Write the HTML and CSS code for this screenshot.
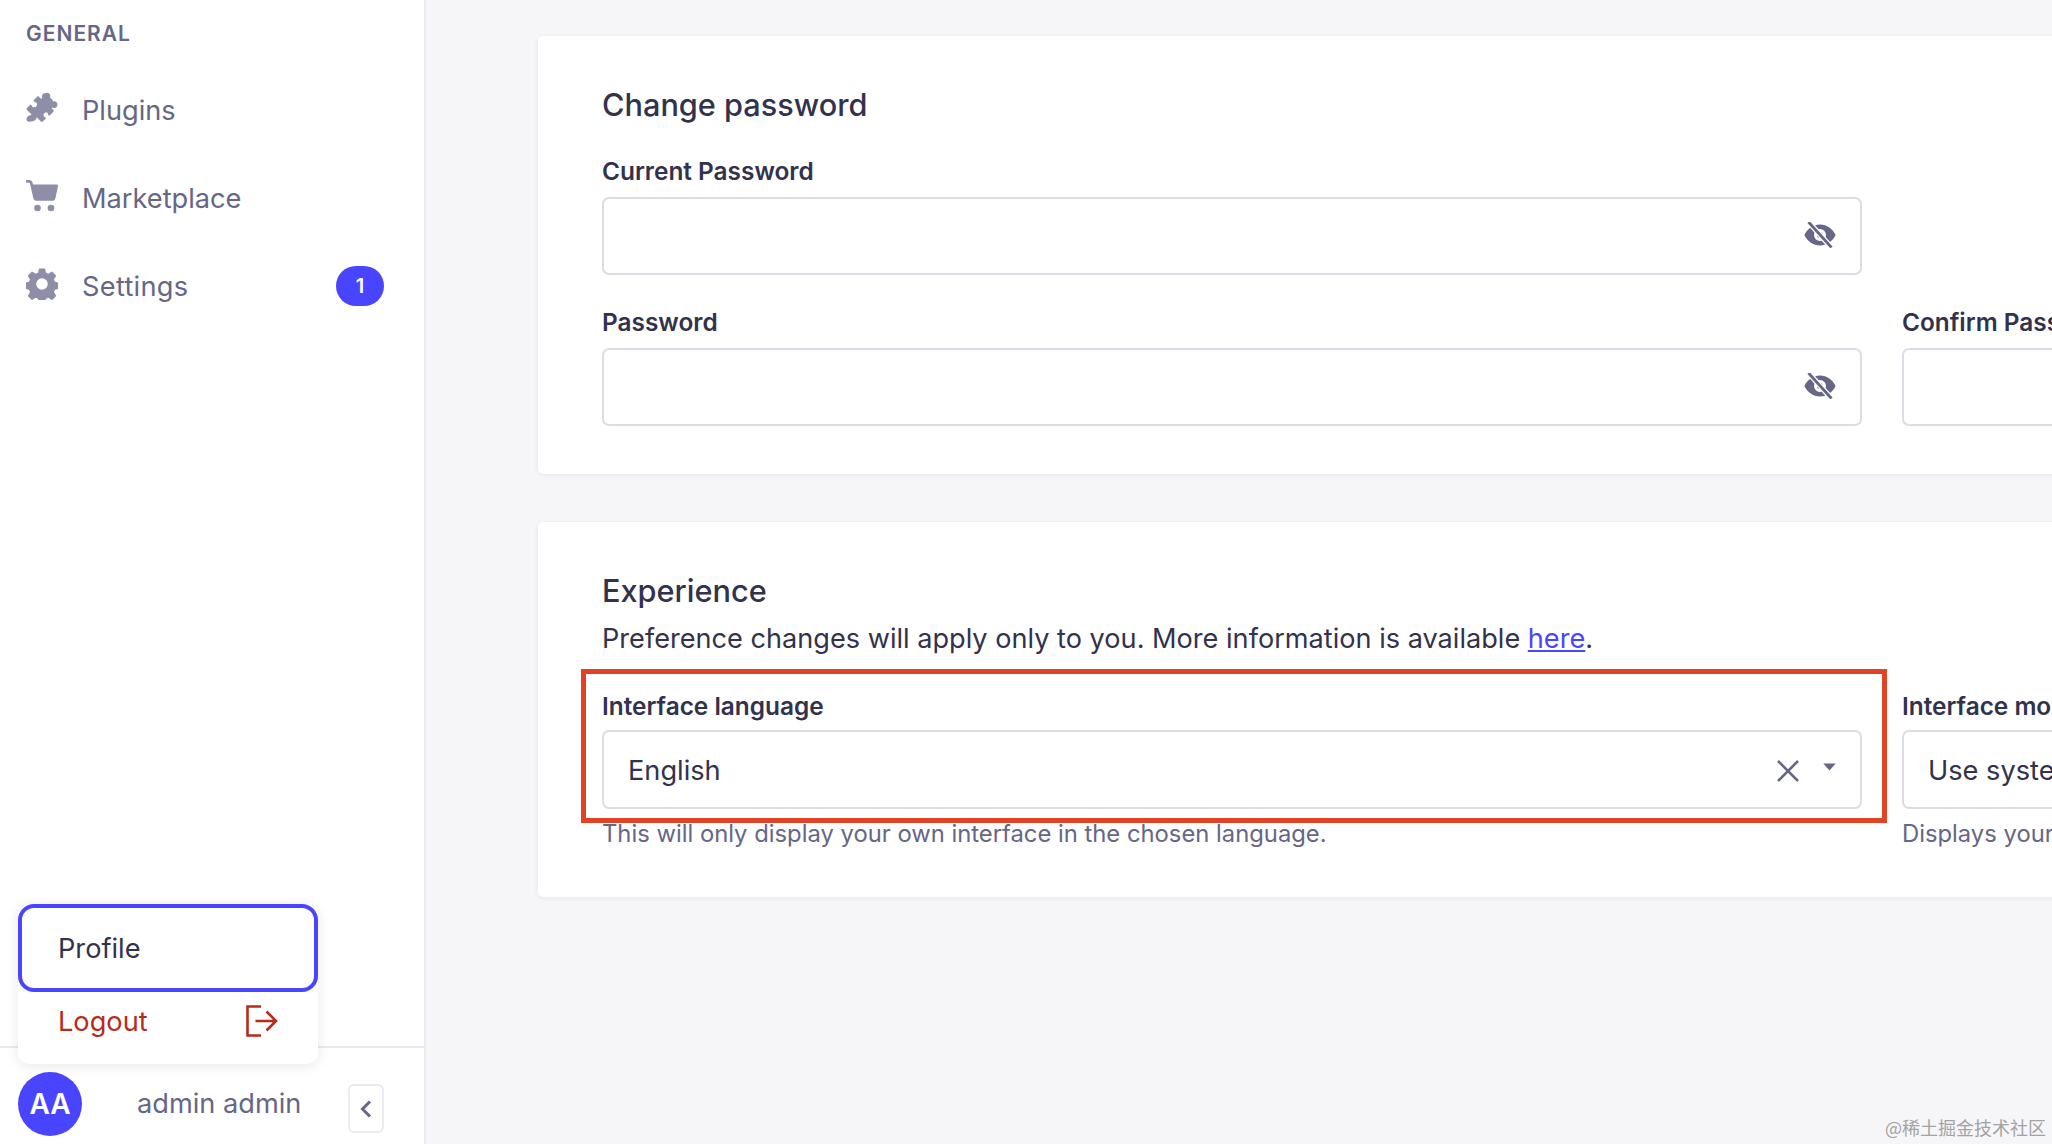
FILE: index.html
```html
<!DOCTYPE html>
<html lang="en">
<head>
<meta charset="utf-8">
<title>Settings</title>
<link rel="stylesheet" href="styles.css">
</head>
<body>
<div class="app">
  <aside class="sidebar">
    <div class="nav-top">
      <div class="section-title">GENERAL</div>
      <a class="nav-item">
        <svg class="nav-icon" viewBox="0 0 32 32"><path d="M19 1.2c2-1.2 4.2-.4 5 1.4.4 1 .3 2 0 2.8l2.600 2.500c.5.500.6 1 .1 1.500l-.3.300c1-.5 2-.6 3-.2 1.900.8 2.700 3 1.500 5-.9 1.500-3 2-4.600 1.100l-.6.700 1.700 1.700c.5.500.5 1.200 0 1.700l-3.500 3.600c-.5.500-1.300.4-1.600-.3-.3-.8-.2-1.500-.8-2-1.200-1-3.200-.4-3.800 1.100-.5 1.200.1 2.600 1.300 3.100.8.300 1.200.6.8 1.200l-3 3c-.6.6-1.300.600-1.900 0l-3.300-3.300c-.5-.5-1.100-.5-1.300.2-.5 1.900-2.400 3.300-4.500 2.900C1.600 30.700.2 28.800.6 26.600c.3-1.900 2-3.100 3.800-3.300.9-.1 1.200-.7.600-1.300L1 18c-.6-.6-.6-1.300 0-1.900l3-3c.7-.7 1.400-.4 1.800.6.600 1.500 2.700 2.100 4.100 1 1.400-1.100 1.400-3.300.1-4.400-.6-.5-1.500-.5-2.100-.9-.7-.4-.6-1 0-1.500l3.200-3.200c.6-.6 1.300-.6 1.900 0l2.300 2.300c.4-.6.500-1 .9-1.400-.6-1.700.1-3.500 1.800-4.400z"/></svg>
        <span>Plugins</span>
      </a>
      <a class="nav-item">
        <svg class="nav-icon" viewBox="0 0 32 32"><path d="M0 0h3.300c1.500 0 2.800 1 3.200 2.500L7 4.500h23.700c.9 0 1.500.8 1.300 1.700l-2.700 12.500c-.3 1.200-1.300 2-2.500 2H10c-1.300 0-2.300-.9-2.600-2.100L4 3.600c-.1-.5-.4-.8-.9-.8H0z"/><circle cx="11.500" cy="28" r="3.300"/><circle cx="25" cy="28" r="3.300"/></svg>
        <span>Marketplace</span>
      </a>
      <a class="nav-item">
        <svg class="nav-icon" viewBox="0 0 32 32"><path fill-rule="evenodd" d="M13 .5h6l1 4.300 2.300 1 3.800-2.300 4.200 4.200-2.300 3.800 1 2.300 4 1v6l-4 1-1 2.300 2.300 3.800-4.200 4.200-3.800-2.300-2.300 1-1 4.200h-6l-1-4.200-2.300-1-3.800 2.300-4.200-4.200 2.300-3.800-1-2.300-4-1v-6l4-1 1-2.300-2.300-3.800L5.900 3.500l3.800 2.300 2.300-1zM16 10.200a5.800 5.800 0 1 0 0 11.600 5.800 5.800 0 0 0 0-11.600z"/></svg>
        <span class="nav-label">Settings</span>
        <span class="badge">1</span>
      </a>
    </div>
    <div class="user-bar">
      <div class="avatar">AA</div>
      <div class="user-name">admin admin</div>
      <button class="collapse" type="button" aria-label="Collapse">
        <svg viewBox="0 0 12 18" width="12" height="18"><path d="M10 1.500 2.500 9l7.500 7.500" fill="none" stroke="#666687" stroke-width="3"/></svg>
      </button>
    </div>
    <div class="popup">
      <div class="popup-profile">Profile</div>
      <div class="popup-logout">
        <span class="logout-text">Logout</span>
        <svg viewBox="0 0 32 32" width="32" height="32"><path d="M15 1.500H1.500v29H15M9.500 16H30M20.500 6.500 30 16l-9.500 9.500" fill="none" stroke="#b72b1a" stroke-width="2.600"/></svg>
      </div>
    </div>
  </aside>
  <main class="main">
    <section class="card card-password">
      <h2 class="card-title">Change password</h2>
      <div class="field-full">
        <label class="label">Current Password</label>
        <div class="input">
          <svg class="eye" viewBox="0 0 32 26"><path fill-rule="evenodd" d="M16 2.500c7 0 12.700 4.200 15.600 10.500C28.700 19.300 23 23.500 16 23.500S3.300 19.300.4 13C3.300 6.700 9 2.500 16 2.500zm0 4.500a6 6 0 1 0 0 12 6 6 0 0 0 0-12zm0 3a3 3 0 1 1 0 6 3 3 0 0 1 0-6z"/><path d="M5 .5 27 25" stroke="#fff" stroke-width="5.500"/><path d="M4.500 0 27.500 25.500" stroke="#666687" stroke-width="2.800"/></svg>
        </div>
      </div>
      <div class="field-row">
        <div class="field">
          <label class="label">Password</label>
          <div class="input">
            <svg class="eye" viewBox="0 0 32 26"><path fill-rule="evenodd" d="M16 2.500c7 0 12.700 4.200 15.600 10.500C28.700 19.300 23 23.500 16 23.500S3.300 19.300.4 13C3.300 6.700 9 2.500 16 2.500zm0 4.500a6 6 0 1 0 0 12 6 6 0 0 0 0-12zm0 3a3 3 0 1 1 0 6 3 3 0 0 1 0-6z"/><path d="M5 .5 27 25" stroke="#fff" stroke-width="5.500"/><path d="M4.500 0 27.500 25.500" stroke="#666687" stroke-width="2.800"/></svg>
          </div>
        </div>
        <div class="field">
          <label class="label">Confirm Password</label>
          <div class="input"></div>
        </div>
      </div>
    </section>
    <section class="card card-experience">
      <h2 class="card-title">Experience</h2>
      <p class="card-desc">Preference changes will apply only to you. More information is available <a class="link">here</a>.</p>
      <div class="field-row select-row">
        <div class="field">
          <label class="label">Interface language</label>
          <div class="input select">
            <span class="select-value">English</span>
            <svg class="clear" viewBox="0 0 24 24"><path d="M2 2l20 20M22 2 2 22" fill="none" stroke="#666687" stroke-width="2.600"/></svg>
            <svg class="caret" viewBox="0 0 14 9"><path d="M0 .5h14L7 8.500z"/></svg>
          </div>
          <p class="hint">This will only display your own interface in the chosen language.</p>
        </div>
        <div class="field">
          <label class="label">Interface mode</label>
          <div class="input select">
            <span class="select-value">Use system settings</span>
          </div>
          <p class="hint">Displays your interface in the chosen mode.</p>
        </div>
      </div>
      <div class="highlight"></div>
    </section>
  </main>
  <div class="watermark">@稀土掘金技术社区</div>
</div>
</body>
</html>
```
FILE: styles.css
```css
* { box-sizing: border-box; }
html, body { margin: 0; height: 100%; overflow: hidden; }
body { font-family: Inter, "Noto Sans", sans-serif; color: #32324d; background: #f6f6f9; }
.app { display: flex; width: 2052px; height: 1144px; position: relative; overflow: hidden; }

.sidebar {
  position: relative;
  flex: 0 0 426px;
  width: 426px;
  display: flex;
  flex-direction: column;
  background: #fff;
  border-right: 2px solid #eaeaef;
}
.nav-top { flex: 1; padding-top: 22px; }
.section-title {
  padding-left: 26px;
  font-size: 21px;
  line-height: 23px;
  font-weight: 600;
  letter-spacing: 1px;
  color: #666687;
  margin-bottom: 21px;
}
.nav-item {
  display: flex;
  align-items: center;
  gap: 24px;
  height: 88px;
  padding: 0 40px 0 26px;
  font-size: 27.2px;
  color: #666687;
}
.nav-icon { width: 32px; height: 32px; fill: #8e8ea9; margin-top: -4px; }
.nav-label { flex: 1; letter-spacing: .3px; }
.badge {
  width: 48px;
  height: 40px;
  border-radius: 20px;
  background: #4945ff;
  color: #fff;
  font-size: 20px;
  font-weight: 600;
  letter-spacing: 0;
  display: flex;
  align-items: center;
  justify-content: center;
}
.user-bar {
  height: 98px;
  border-top: 2px solid #eaeaef;
  display: flex;
  align-items: flex-start;
  padding: 24px 40px 0 18px;
}
.avatar {
  width: 64px;
  height: 64px;
  border-radius: 50%;
  background: #4945ff;
  color: #fff;
  font-size: 28px;
  font-weight: 600;
  display: flex;
  align-items: center;
  justify-content: center;
  flex: none;
}
.user-name { flex: 1; padding-left: 55px; font-size: 27.2px; line-height: 34px; color: #666687; margin-top: 15px; }
.collapse {
  width: 36px;
  height: 49px;
  padding: 0;
  border: 2px solid #eaeaef;
  border-radius: 6px;
  background: #fff;
  display: flex;
  align-items: center;
  justify-content: center;
  margin-top: 12px;
}
.popup {
  position: absolute;
  left: 18px;
  top: 904px;
  width: 300px;
  height: 160px;
  background: #fff;
  border-radius: 10px;
  box-shadow: 0 2px 12px rgba(33, 33, 52, .1);
}
.popup-profile {
  height: 88px;
  border: 4px solid #4945ff;
  border-radius: 16px;
  padding-left: 36px;
  display: flex;
  align-items: center;
  font-size: 27.2px;
  color: #32324d;
}
.popup-logout {
  display: flex;
  align-items: center;
  justify-content: space-between;
  padding: 11px 40px 0 40px;
  font-size: 27.2px;
  color: #b72b1a;
}
.logout-text { margin-top: 2px; }

.main { flex: 1; min-width: 0; padding: 36px 0 0 112px; overflow: hidden; }
.card {
  position: relative;
  width: 2688px;
  background: #fff;
  border-radius: 5px;
  box-shadow: 0 1px 4px rgba(33, 33, 52, .08);
  padding: 0 64px;
}
.card-password { height: 438px; padding-top: 49px; margin-bottom: 48px; }
.card-experience { height: 375px; padding-top: 49px; }
.card-title { margin: 0; font-size: 30.7px; line-height: 40px; font-weight: 500; color: #32324d; }
.label { display: block; font-size: 24.4px; line-height: 30px; font-weight: 600; color: #32324d; }
.field-full { width: 1260px; margin-top: 31px; }
.field-row { display: grid; grid-template-columns: 1260px 1260px; gap: 40px; }
.card-password .field-row { margin-top: 32px; }
.input {
  position: relative;
  height: 78px;
  margin-top: 11px;
  background: #fff;
  border: 2px solid #dcdce4;
  border-radius: 7px;
  display: flex;
  align-items: center;
  justify-content: flex-end;
  padding: 0 24px;
}
.eye { width: 32px; height: 26px; fill: #666687; margin-top: -2px; }
.card-desc { margin: 9px 0 0; font-size: 27.13px; line-height: 38px; color: #32324d; }
.link { color: #4945ff; text-decoration: underline; }
.select-row { margin-top: 33px; }
.select-row .input { margin-top: 9px; height: 79px; }
.select { justify-content: flex-start; font-size: 27.2px; color: #32324d; }
.select-value { flex: 1; margin-top: 2px; }
.clear { width: 24px; height: 24px; margin: 2px 23px 0 0; }
.caret { width: 13px; height: 8px; fill: #666687; margin-top: -6px; }
.hint { margin: 10px 0 0; font-size: 23.8px; line-height: 30px; color: #666687; }
.highlight {
  position: absolute;
  left: 43px;
  top: 147px;
  width: 1306px;
  height: 154px;
  border: 5px solid #e04425;
  pointer-events: none;
}
.watermark {
  position: absolute;
  right: 6px;
  bottom: 4px;
  font-family: "Noto Sans CJK SC", sans-serif;
  font-size: 18px;
  line-height: 26px;
  color: #a3a3a3;
}
```
